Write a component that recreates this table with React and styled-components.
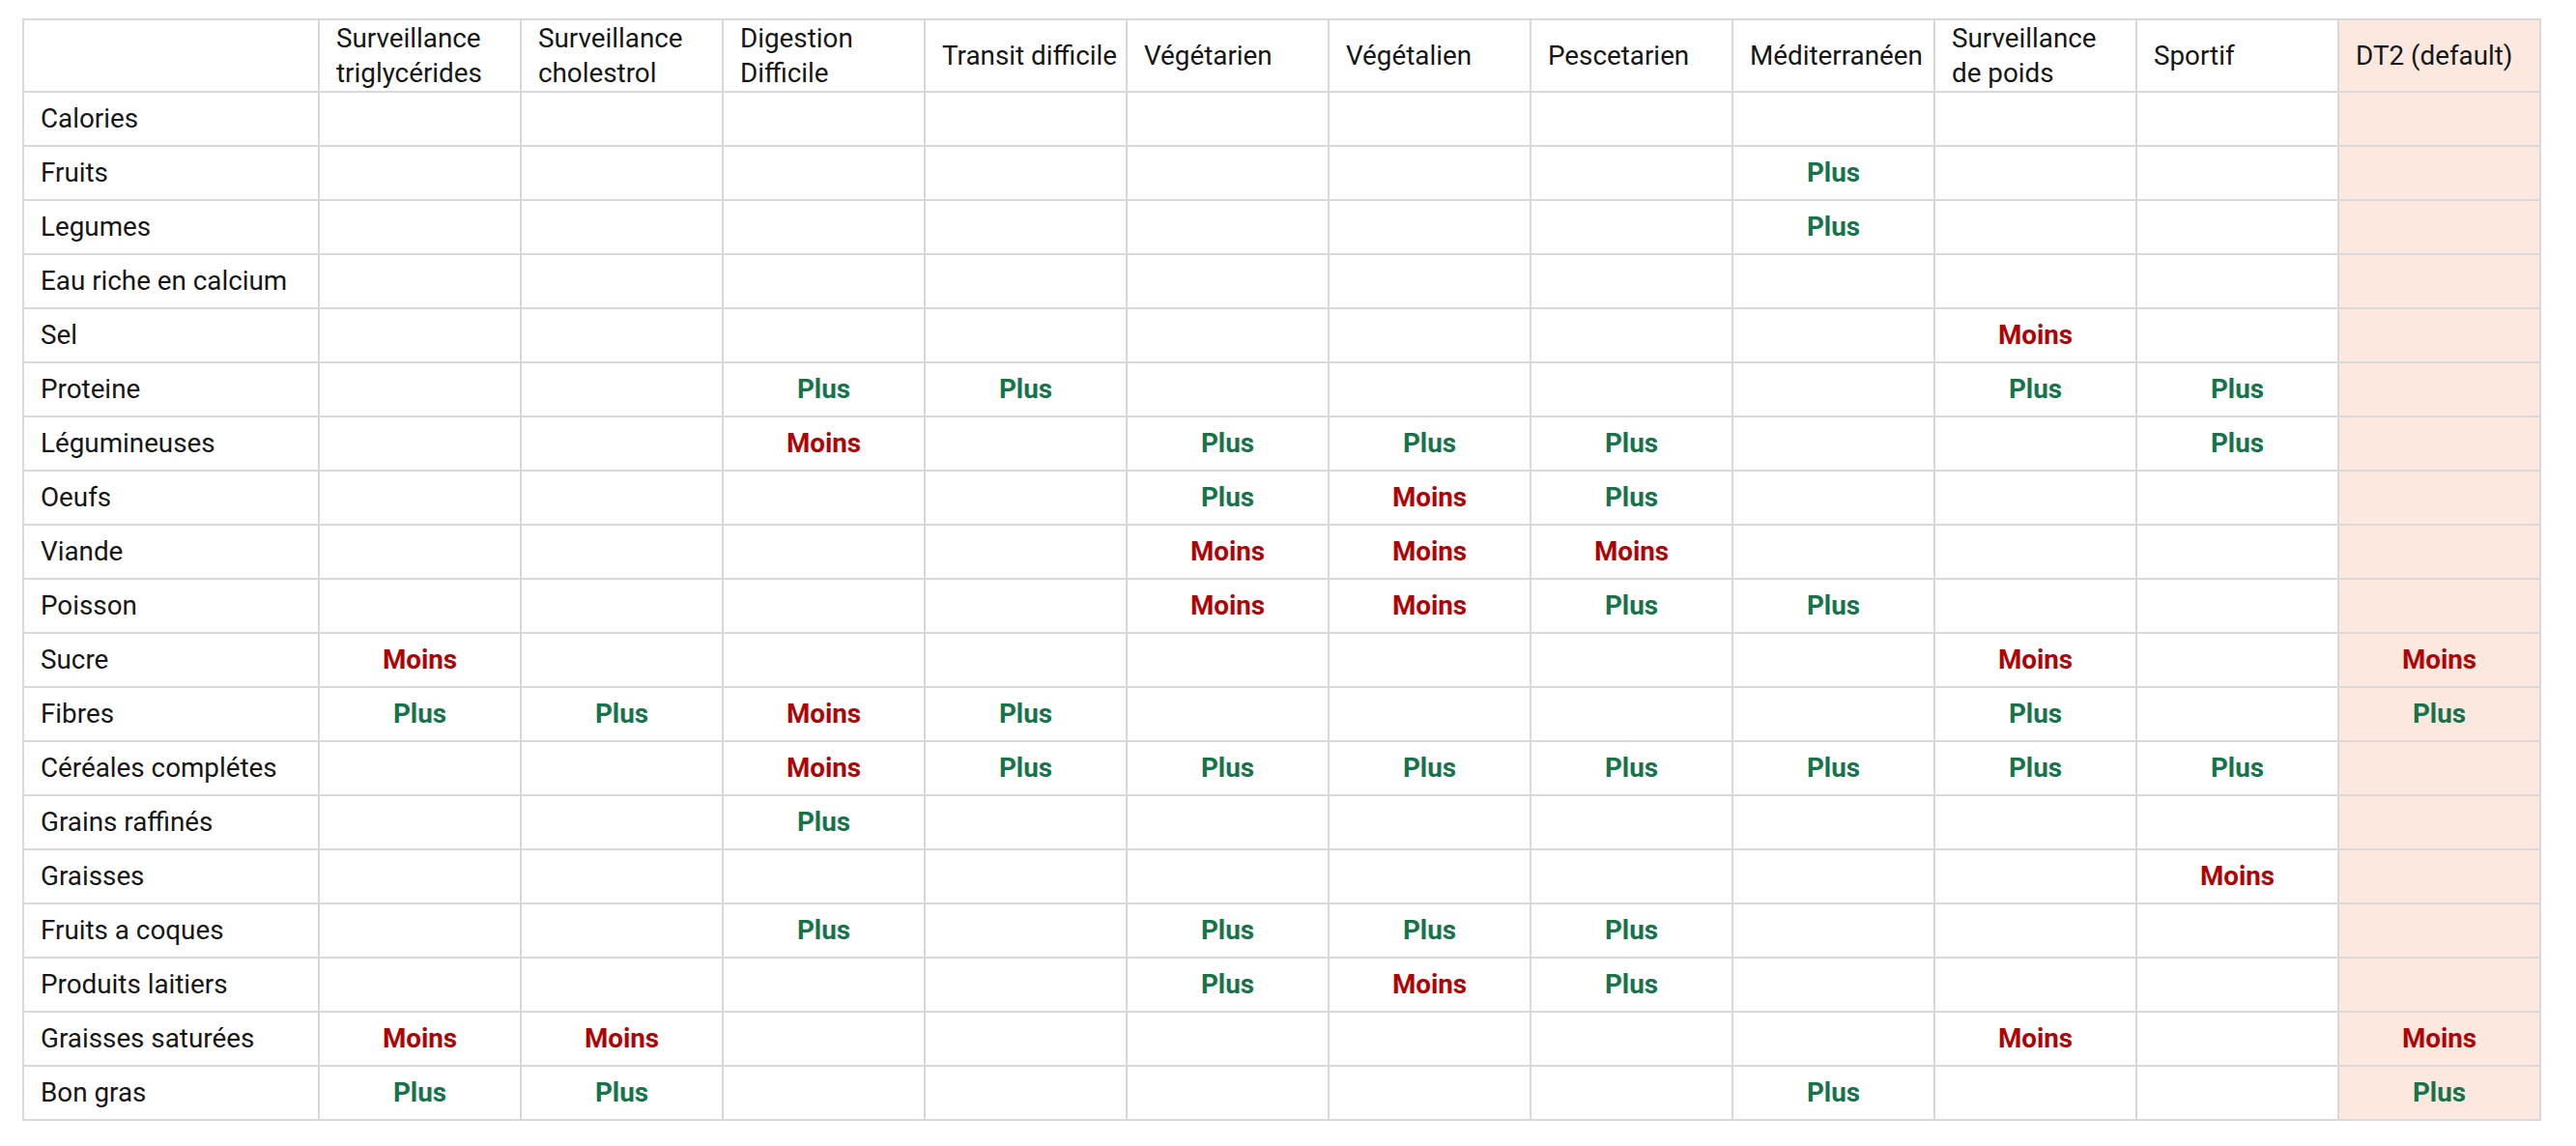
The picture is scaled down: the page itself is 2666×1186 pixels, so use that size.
import React from "react";
import styled, { createGlobalStyle } from "styled-components";

const GlobalStyle = createGlobalStyle`
  html, body {
    margin: 0;
    padding: 0;
    background: #ffffff;
  }
  body {
    font-family: Roboto, "Noto Sans", "DejaVu Sans", sans-serif;
    color: #161616;
  }
`;

const Page = styled.div`
  padding: 19px 0 0 23px;
  background: #ffffff;
  min-height: 1186px;
  box-sizing: border-box;
`;

const Grid = styled.div`
  display: grid;
  grid-template-columns: 304px repeat(11, 207px);
  grid-template-rows: 73px;
  grid-auto-rows: 54px;
  gap: 2px;
  padding: 2px;
  width: max-content;
  background: #d9d9d9;
`;

const Cell = styled.div`
  display: flex;
  align-items: center;
  background: ${(p) => (p.$highlight ? "#fde8df" : "#ffffff")};
  font-size: 27.8px;
  line-height: 36px;
  box-sizing: border-box;
  min-width: 0;
`;

const HeadCell = styled(Cell)`
  padding: 0 4px 0 17px;
  white-space: pre;
  font-weight: 400;
`;

const LabelCell = styled(Cell)`
  padding: 0 8px 0 17px;
  white-space: nowrap;
`;

const ValueCell = styled(Cell)`
  justify-content: center;
  font-weight: 700;
  color: ${(p) => (p.$kind === "P" ? "#17734a" : p.$kind === "M" ? "#b00404" : "inherit")};
`;

const columns = [
  "Surveillance\ntriglycérides",
  "Surveillance\ncholestrol",
  "Digestion\nDifficile",
  "Transit difficile",
  "Végétarien",
  "Végétalien",
  "Pescetarien",
  "Méditerranéen",
  "Surveillance\nde poids",
  "Sportif",
  "DT2 (default)",
];

const DEFAULT_COL = 10;

const rows = [
  ["Calories", "..........."],
  ["Fruits", ".......P..."],
  ["Legumes", ".......P..."],
  ["Eau riche en calcium", "..........."],
  ["Sel", "........M.."],
  ["Proteine", "..PP....PP."],
  ["Légumineuses", "..M.PPP..P."],
  ["Oeufs", "....PMP...."],
  ["Viande", "....MMM...."],
  ["Poisson", "....MMPP..."],
  ["Sucre", "M.......M.M"],
  ["Fibres", "PPMP....P.P"],
  ["Céréales complétes", "..MPPPPPPP."],
  ["Grains raffinés", "..P........"],
  ["Graisses", ".........M."],
  ["Fruits a coques", "..P.PPP...."],
  ["Produits laitiers", "....PMP...."],
  ["Graisses saturées", "MM......M.M"],
  ["Bon gras", "PP.....P..P"],
];

const LABELS = { P: "Plus", M: "Moins" };

export default function App() {
  return (
    <>
      <GlobalStyle />
      <Page>
        <Grid>
          <HeadCell />
          {columns.map((c, i) => (
            <HeadCell key={c} $highlight={i === DEFAULT_COL}>
              {c}
            </HeadCell>
          ))}
          {rows.map(([label, values]) => (
            <React.Fragment key={label}>
              <LabelCell>{label}</LabelCell>
              {values.split("").map((v, i) => (
                <ValueCell key={i} $kind={v} $highlight={i === DEFAULT_COL}>
                  {LABELS[v] || ""}
                </ValueCell>
              ))}
            </React.Fragment>
          ))}
        </Grid>
      </Page>
    </>
  );
}
